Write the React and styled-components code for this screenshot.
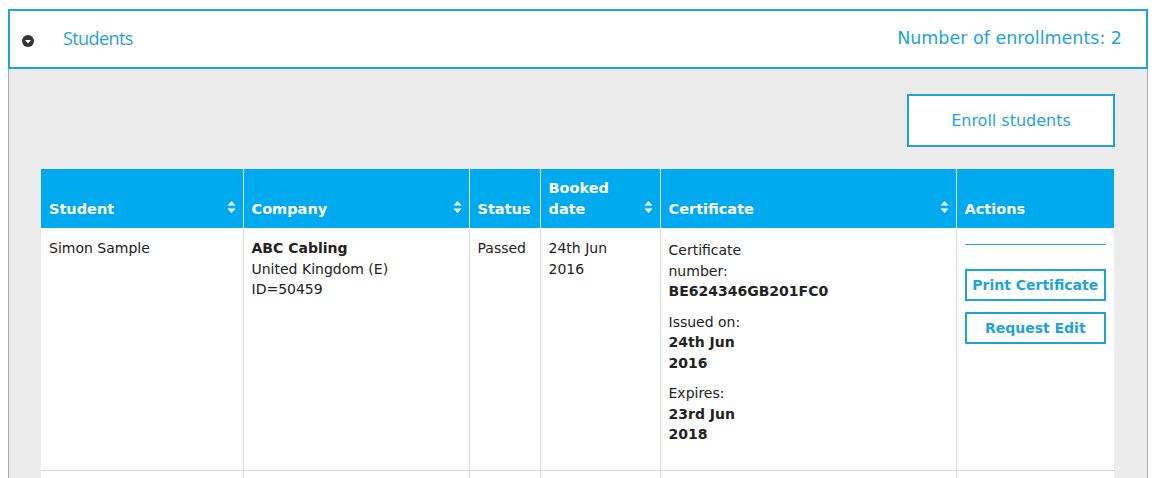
import styled, { createGlobalStyle } from 'styled-components';

const GlobalStyle = createGlobalStyle`
    body {
        margin: 0;
        padding: 9px 8px 0 8px;
        background: #fff;
        font-family: Verdana, "DejaVu Sans", sans-serif;
        overflow: hidden;
    }
`

const BLUE = '#1fa3dc'
const HEAD = '#00aaef'

const columns = [
    { key: 'student', label: 'Student', width: 202, sort: true },
    { key: 'company', label: 'Company', width: 226, sort: true },
    { key: 'status', label: 'Status', width: 71, sort: false },
    { key: 'booked', label: 'Booked date', width: 120, sort: true },
    { key: 'certificate', label: 'Certificate', width: 296, sort: true },
    { key: 'actions', label: 'Actions', width: 158, sort: false },
]

const SortIcon = () => (
    <svg width="9" height="14" viewBox="0 0 9 14">
        <path d="M4.5 1 L8.5 5.5 L0.5 5.5 Z" fill="#fff" />
        <path d="M4.5 13 L8.5 8.5 L0.5 8.5 Z" fill="#fff" />
    </svg>
)

const CaretCircle = () => (
    <svg width="12" height="12" viewBox="0 0 12 12">
        <circle cx="6" cy="6" r="6" fill="#333" />
        <path d="M3 5 L9 5 L6 8.5 Z" fill="#fff" />
    </svg>
)

const App = () => {
    return (
        <>
            <GlobalStyle />
            <Panel>
                <PanelHeader>
                    <Toggle><CaretCircle /></Toggle>
                    <Title>Students</Title>
                    <Count>Number of enrollments: 2</Count>
                </PanelHeader>
                <PanelBody>
                    <Toolbar>
                        <EnrollButton>Enroll students</EnrollButton>
                    </Toolbar>
                    <Table>
                        <colgroup>
                            {columns.map((c) => <col key={c.key} style={{ width: c.width }} />)}
                        </colgroup>
                        <thead>
                            <tr>
                                {columns.map((c) => (
                                    <HeadCell key={c.key}>
                                        <HeadInner>
                                            <HeadLabel narrow={c.key === 'booked'}>{c.label}</HeadLabel>
                                            {c.sort && <SortWrap><SortIcon /></SortWrap>}
                                        </HeadInner>
                                    </HeadCell>
                                ))}
                            </tr>
                        </thead>
                        <tbody>
                            <tr>
                                <Cell>Simon Sample</Cell>
                                <Cell>
                                    <Strong>ABC Cabling</Strong><br />
                                    United Kingdom (E)<br />
                                    ID=50459
                                </Cell>
                                <Cell>Passed</Cell>
                                <Cell>24th Jun<br />2016</Cell>
                                <Cell>
                                    <CertBlock>
                                        <CertItem>
                                            Certificate number:<br />
                                            <Strong>BE624346GB201FC0</Strong>
                                        </CertItem>
                                        <CertItem>
                                            Issued on:<br />
                                            <Strong>24th Jun 2016</Strong>
                                        </CertItem>
                                        <CertItem>
                                            Expires:<br />
                                            <Strong>23rd Jun 2018</Strong>
                                        </CertItem>
                                    </CertBlock>
                                </Cell>
                                <Cell>
                                    <Actions>
                                        <Divider />
                                        <ActionButton>Print Certificate</ActionButton>
                                        <ActionButton>Request Edit</ActionButton>
                                    </Actions>
                                </Cell>
                            </tr>
                            <tr>
                                {columns.map((c) => <Cell key={c.key} empty />)}
                            </tr>
                        </tbody>
                    </Table>
                </PanelBody>
            </Panel>
        </>
    )
}

const Panel = styled.div`
    width: 1140px;
`

const PanelHeader = styled.div`
    display: flex;
    align-items: center;
    height: 56px;
    border: 2px solid ${BLUE};
    background: #fff;
    padding: 0 24px 0 12px;
`

const Toggle = styled.div`
    display: flex;
    width: 12px;
    margin-top: 3px;
`

const Title = styled.div`
    flex: 1;
    margin-left: 29px;
    margin-top: -3px;
    font-family: "Open Sans", sans-serif;
    font-size: 18px;
    font-weight: 500;
    color: ${BLUE};
    letter-spacing: -0.6px;
`

const Count = styled.div`
    font-size: 17.5px;
    color: ${BLUE};
    margin-top: -2px;
`

const PanelBody = styled.div`
    background: #ececec;
    border-left: 1px solid #aaa;
    border-right: 1px solid #aaa;
    padding: 25px 32px 0 32px;
    height: 384px;
    overflow: hidden;
`

const Toolbar = styled.div`
    display: flex;
    justify-content: flex-end;
    margin-bottom: 22px;
`

const EnrollButton = styled.button`
    width: 208px;
    height: 53px;
    background: #fff;
    border: 2px solid ${BLUE};
    color: ${BLUE};
    font-family: Verdana, "DejaVu Sans", sans-serif;
    font-size: 16px;
    padding: 0;
`

const Table = styled.table`
    width: 1073px;
    border-collapse: collapse;
    table-layout: fixed;
    background: #fff;
`

const HeadCell = styled.th`
    background: ${HEAD};
    color: #fff;
    height: 51px;
    padding: 0 8px 8px 8px;
    vertical-align: bottom;
    text-align: left;
    border-left: 1px solid #e6f6fd;
    font-size: 14.5px;
    font-weight: bold;
    &:first-child { border-left: none; }
`

const HeadInner = styled.div`
    display: flex;
    align-items: flex-end;
    justify-content: space-between;
    line-height: 21px;
`

const HeadLabel = styled.span`
    ${(p) => p.narrow && 'width: 70px;'}
`

const SortWrap = styled.span`
    display: flex;
    margin-bottom: 6px;
    margin-right: -1px;
`

const Cell = styled.td`
    vertical-align: top;
    padding: 10px 8px;
    height: ${(p) => (p.empty ? '20px' : '222px')};
    border: 1px solid #dadada;
    border-top: none;
    font-size: 14px;
    line-height: 20.5px;
    color: #222;
    &:first-child { border-left: none; }
    &:last-child { border-right: none; }
`

const Strong = styled.b`
    font-weight: bold;
`

const CertBlock = styled.div`
    width: 85px;
    padding-top: 2px;
`

const CertItem = styled.div`
    margin-bottom: 10px;
`

const Actions = styled.div`
    display: flex;
    flex-direction: column;
    gap: 11px;
    padding-top: 6px;
`

const Divider = styled.div`
    height: 1px;
    background: ${BLUE};
    margin-bottom: 13px;
`

const ActionButton = styled.button`
    height: 32px;
    background: #fff;
    border: 2px solid ${BLUE};
    color: ${BLUE};
    font-family: Verdana, "DejaVu Sans", sans-serif;
    font-size: 14px;
    font-weight: bold;
    padding: 0;
`

export default App
